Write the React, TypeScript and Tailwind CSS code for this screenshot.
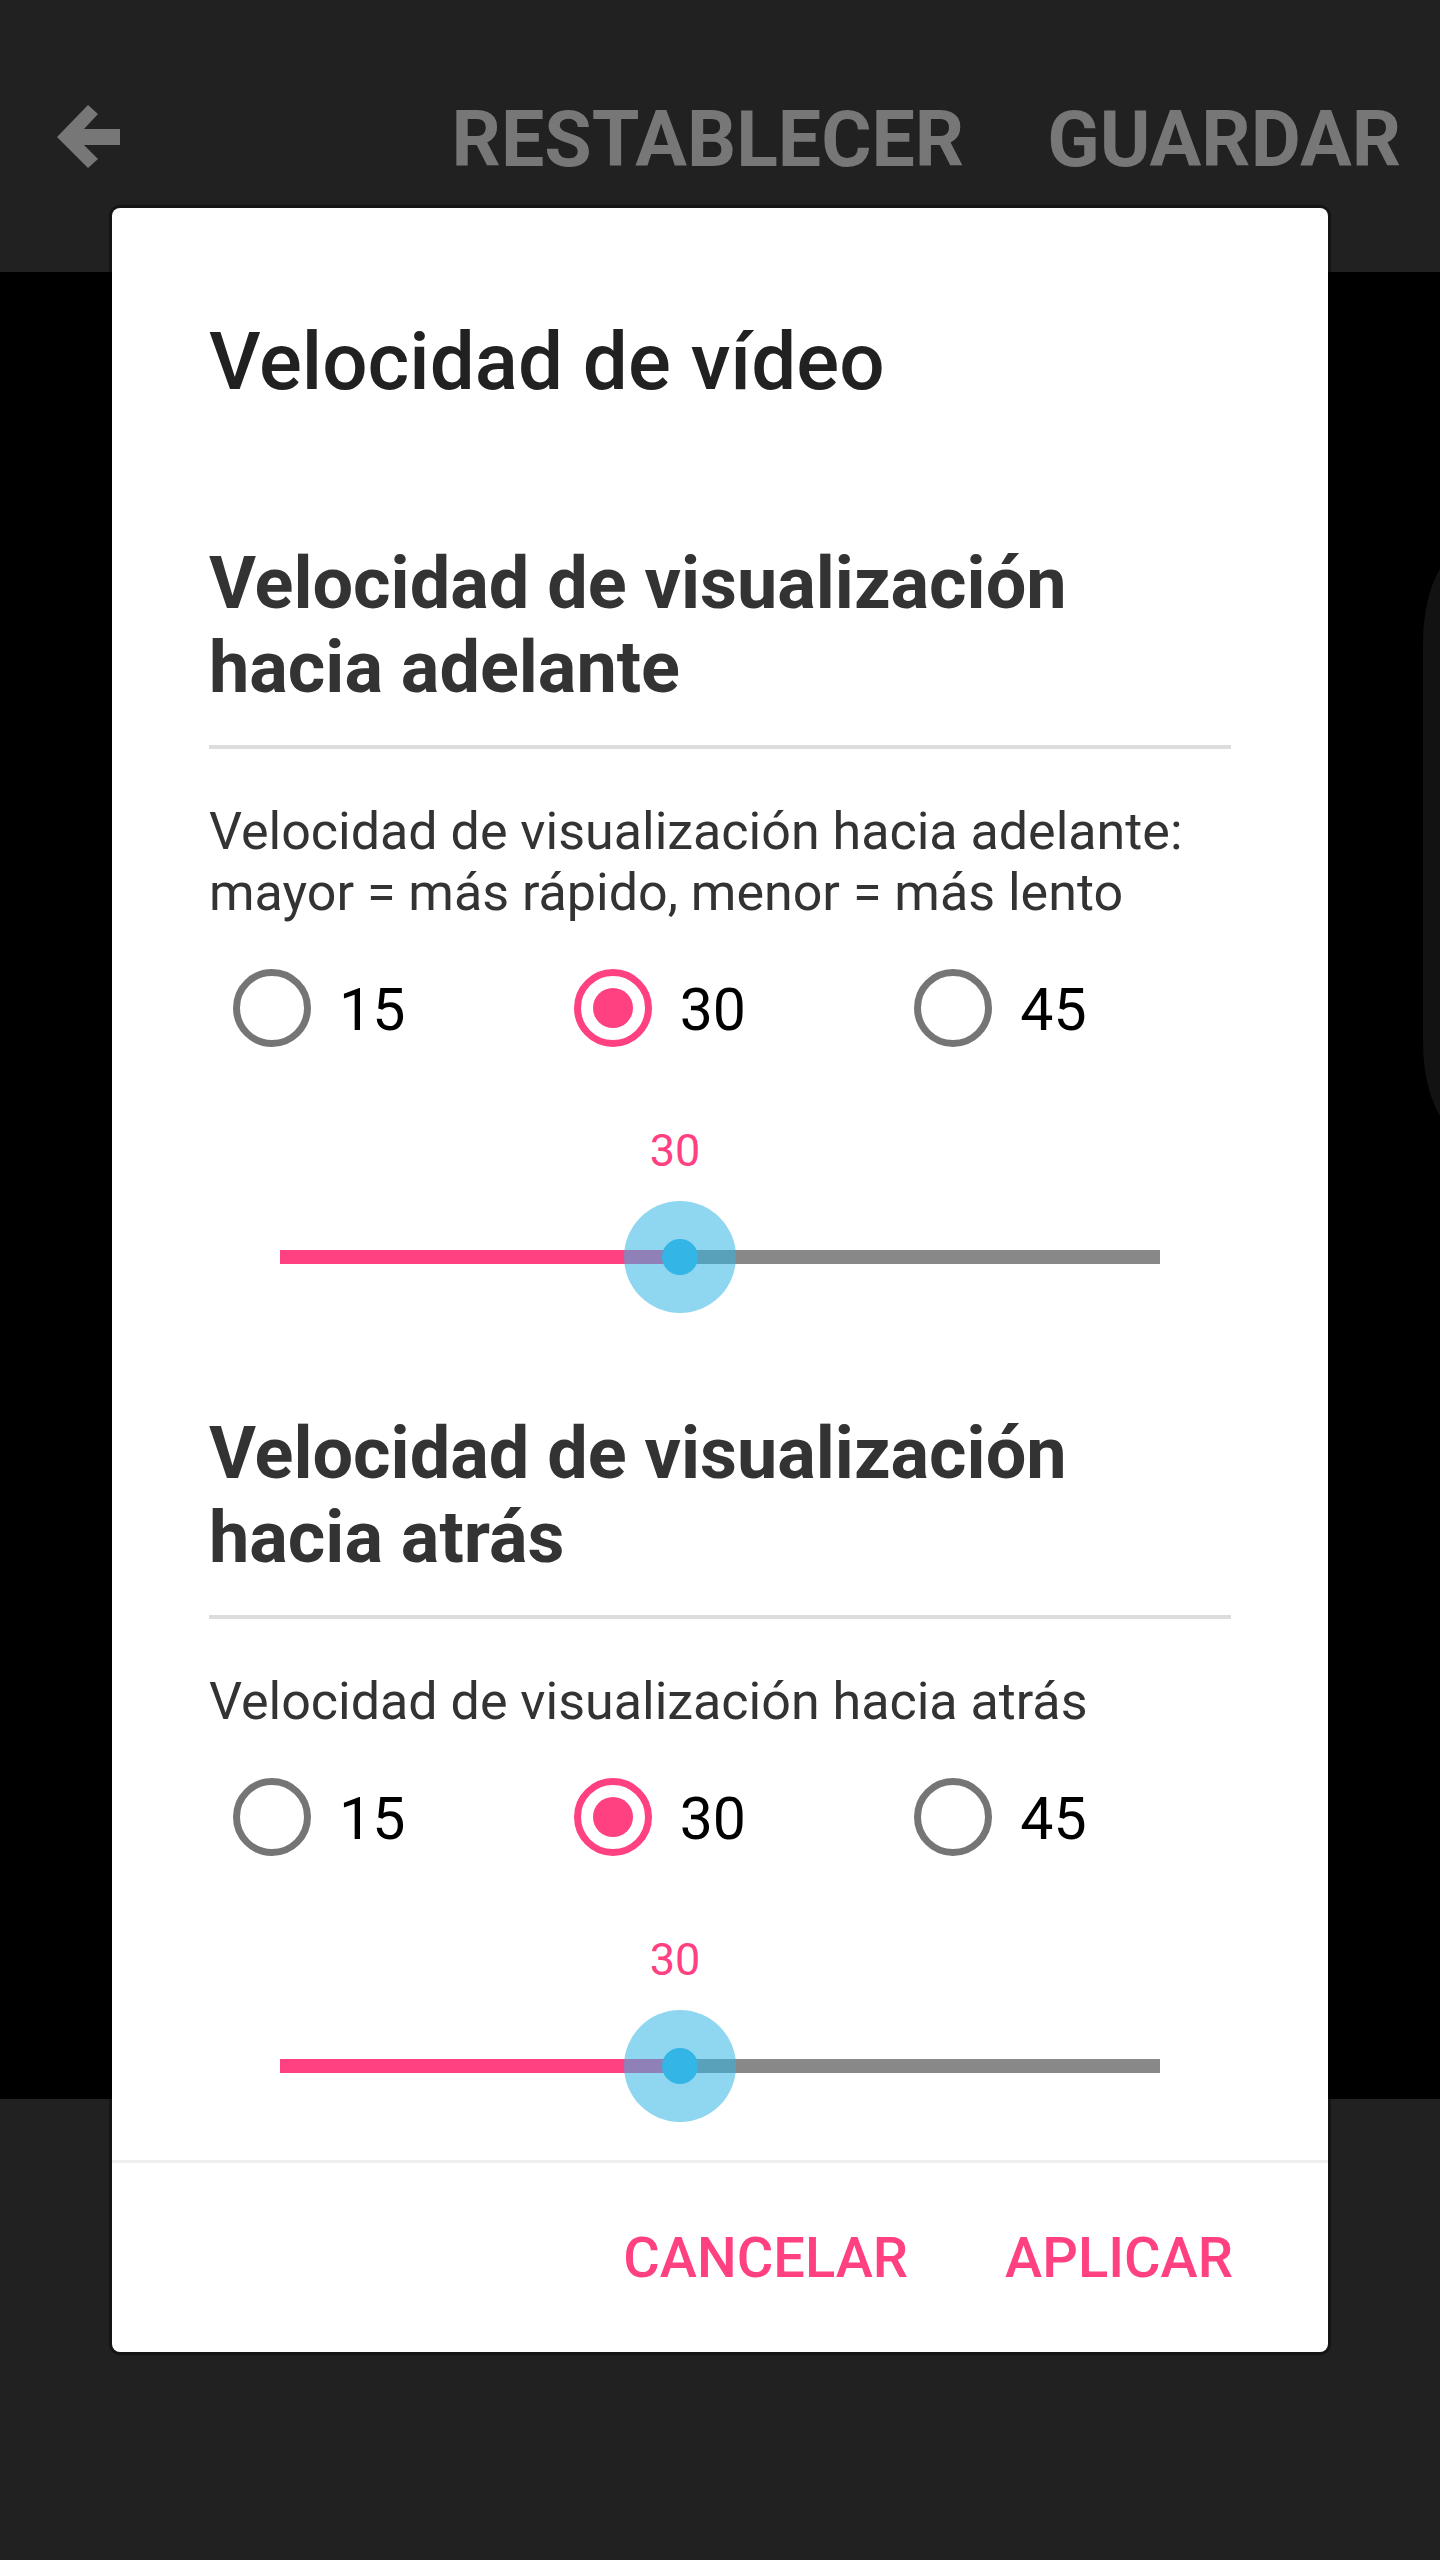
import React from "react";

const MIN = 5;
const MAX = 60;

function BackArrow() {
  return (
    <svg width="63" height="63" viewBox="0 0 63 63" className="shrink-0">
      <polygon
        points="0,32 31,0 41,9 27,24 63,24 63,40 27,40 41,54 31,63"
        fill="#777777"
      />
    </svg>
  );
}

function Radio({ label, checked }: { label: string; checked?: boolean }) {
  return (
    <div className="flex items-center gap-[28px] pl-[24px]">
      <span
        className={
          checked
            ? "flex size-[78px] items-center justify-center rounded-full border-[7px] border-[#ff4081]"
            : "flex size-[78px] items-center justify-center rounded-full border-[7px] border-[#757575]"
        }
      >
        {checked ? <span className="size-[40px] rounded-full bg-[#ff4081]" /> : null}
      </span>
      <span className="pt-[3px] text-[59px] leading-none text-black">{label}</span>
    </div>
  );
}

function SpeedSection({
  title,
  subtitle,
  desc,
  value,
  className,
}: {
  title: string;
  subtitle: string;
  desc: string;
  value: number;
  className?: string;
}) {
  const pct = `${((value - MIN) / (MAX - MIN)) * 100}%`;
  return (
    <section className={className}>
      <h2 className="text-[72px] font-bold leading-[84px] text-[#333333]">
        {title}
        <br />
        {subtitle}
      </h2>
      <div className="mt-[35px] h-[4px] bg-[#dddddd]" />
      <p className="mt-[52px] text-[52px] leading-[61px] text-[#333333]">{desc}</p>

      <div className="mt-[46px] grid h-[78px] grid-cols-3">
        <Radio label="15" />
        <Radio label="30" checked />
        <Radio label="45" />
      </div>

      <div className="relative mx-[71px] mt-[81px] h-[45px]">
        <span
          className="absolute top-0 -ml-[5px] -translate-x-1/2 text-[45px] leading-none text-[#ff4081]"
          style={{ left: pct }}
        >
          {value}
        </span>
      </div>

      <div className="relative mx-[71px] mt-[28px] flex h-[112px] items-center">
        <div className="h-[14px] bg-[#ff4081]" style={{ width: pct }} />
        <div className="h-[14px] flex-1 bg-[#888888]" />
        <div
          className="absolute top-0 flex size-[112px] -translate-x-1/2 items-center justify-center rounded-full bg-[#33b5e5]/55 blur-[0.6px]"
          style={{ left: pct }}
        >
          <div className="size-[36px] rounded-full bg-[#33b5e5]" />
        </div>
      </div>
    </section>
  );
}

export default function App() {
  return (
    <div className="relative h-[2560px] w-[1440px] overflow-hidden font-['Roboto',sans-serif]">
      <header className="flex h-[272px] items-center bg-[#212121] pl-[57px] pr-[39px]">
        <BackArrow />
        <div className="ml-auto flex gap-[83px] pt-[8px] text-[77px] font-bold leading-none text-[#777777]">
          <span>RESTABLECER</span>
          <span>GUARDAR</span>
        </div>
      </header>

      <main className="flex h-[1827px] justify-end overflow-hidden bg-black pt-[281px]">
        <div className="-mr-[63px] h-[579px] w-[80px] shrink-0 rounded-l-[40px_90px] bg-[#121212]" />
      </main>

      <footer className="h-[461px] bg-[#212121]" />

      <div className="absolute left-[112px] top-[208px] flex h-[2144px] w-[1216px] flex-col rounded-[8px] bg-white shadow-[0_0_0_3px_rgba(0,0,0,0.35)]">
        <div className="flex-1 overflow-hidden px-[97px] pt-[114px]">
          <h1 className="text-[80px] font-medium leading-none text-[#212121]">
            Velocidad de vídeo
          </h1>
          <SpeedSection
            className="mt-[140px]"
            title="Velocidad de visualización"
            subtitle="hacia adelante"
            desc="Velocidad de visualización hacia adelante: mayor = más rápido, menor = más lento"
            value={30}
          />
          <SpeedSection
            className="mt-[99px]"
            title="Velocidad de visualización"
            subtitle="hacia atrás"
            desc="Velocidad de visualización hacia atrás"
            value={30}
          />
        </div>
        <div className="h-[3px] bg-[#eeeeee]" />
        <div className="flex h-[189px] items-center justify-end gap-[97px] pr-[95px] text-[56px] font-medium leading-none text-[#ff4081]">
          <button type="button">CANCELAR</button>
          <button type="button">APLICAR</button>
        </div>
      </div>
    </div>
  );
}
